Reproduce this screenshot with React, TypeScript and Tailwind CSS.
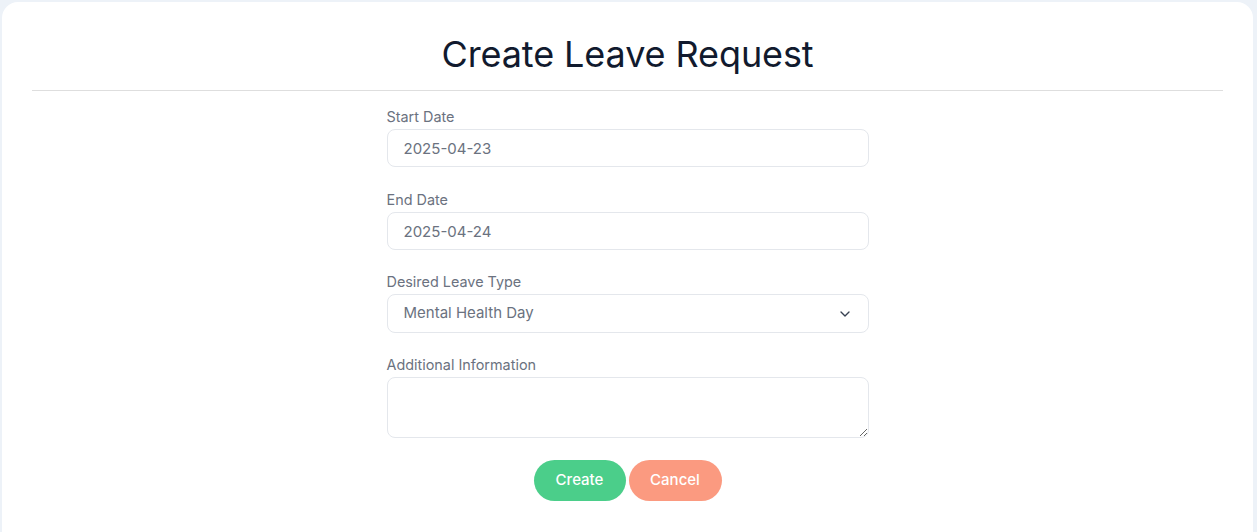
import React, { useState } from 'react';
import { ChevronDown } from 'lucide-react';

const fieldClass =
  'block w-full h-[38px] px-4 bg-white border border-[#e4e7ec] rounded-lg text-[15px] text-[#6b7280] focus:outline-none';

const App: React.FC = () => {
  const [startDate, setStartDate] = useState('2025-04-23');
  const [endDate, setEndDate] = useState('2025-04-24');
  const [leaveType, setLeaveType] = useState('Mental Health Day');
  const [info, setInfo] = useState('');

  return (
    <div
      className="min-h-screen bg-[#edf2f8] pl-[2px] pr-[4px] pt-[2px]"
      style={{ fontFamily: 'Inter, "Noto Sans", sans-serif' }}
    >
      <div className="bg-white rounded-2xl px-[30px] pt-7 min-h-[560px]">
        <h1 className="text-center text-[36px] leading-[48px] text-[#111a2e] font-normal tracking-[-0.1px] pb-3 border-b border-[#dedede]">
          Create Leave Request
        </h1>

        <form className="mx-auto w-[482px] pt-4" onSubmit={(e) => e.preventDefault()}>
          <div className="mb-[23px]">
            <label htmlFor="startDate" className="block text-[14.4px] leading-5 text-[#6b7280] mb-[2px]">
              Start Date
            </label>
            <input
              id="startDate"
              type="text"
              value={startDate}
              onChange={(e) => setStartDate(e.target.value)}
              className={fieldClass}
            />
          </div>

          <div className="mb-[22px]">
            <label htmlFor="endDate" className="block text-[14.4px] leading-5 text-[#6b7280] mb-[2px]">
              End Date
            </label>
            <input
              id="endDate"
              type="text"
              value={endDate}
              onChange={(e) => setEndDate(e.target.value)}
              className={fieldClass}
            />
          </div>

          <div className="mb-[22px]">
            <label htmlFor="leaveType" className="block text-[14.4px] leading-5 text-[#6b7280] mb-[2px]">
              Desired Leave Type
            </label>
            <div className="relative">
              <select
                id="leaveType"
                value={leaveType}
                onChange={(e) => setLeaveType(e.target.value)}
                className="block w-full h-[39px] pl-4 pr-10 appearance-none bg-white border border-[#e4e7ec] rounded-lg text-[15px] text-[#6b7280] focus:outline-none"
              >
                <option>Mental Health Day</option>
                <option>Annual Leave</option>
                <option>Sick Leave</option>
              </select>
              <ChevronDown
                size={16}
                strokeWidth={2}
                className="absolute right-[16px] top-1/2 -translate-y-1/2 text-[#374151] pointer-events-none"
              />
            </div>
          </div>

          <div className="mb-[22px]">
            <label htmlFor="info" className="block text-[14.4px] leading-5 text-[#6b7280] mb-[2px]">
              Additional Information
            </label>
            <textarea
              id="info"
              value={info}
              onChange={(e) => setInfo(e.target.value)}
              className="block w-full h-[61px] px-4 py-2 bg-white border border-[#e4e7ec] rounded-lg text-[15px] text-[#6b7280] focus:outline-none"
            />
          </div>

          <div className="flex justify-center gap-[3px]">
            <button
              type="submit"
              className="w-[92px] h-[41px] rounded-full bg-[#4bce8a] text-white text-[15px] font-medium"
            >
              Create
            </button>
            <button
              type="button"
              className="w-[93px] h-[41px] rounded-full bg-[#fb9a80] text-white text-[15px] font-medium"
            >
              Cancel
            </button>
          </div>
        </form>
      </div>
    </div>
  );
};

export default App;
